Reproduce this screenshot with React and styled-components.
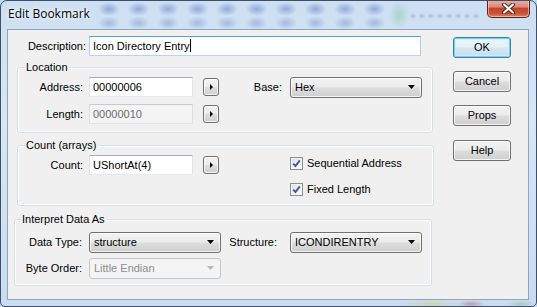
import styled, { createGlobalStyle } from "styled-components";

const GlobalStyle = createGlobalStyle`
  html, body { margin: 0; padding: 0; background: #c6d8ec; }
  * { box-sizing: border-box; }
`;

const blob = (x, y, rx, ry, c) =>
  `radial-gradient(ellipse ${rx}px ${ry}px at ${x}px ${y}px, ${c}, rgba(0,0,0,0))`;

const titleBlobs = (() => {
  const list = [];
  for (let x = 108; x <= 380; x += 29.5) {
    list.push(blob(x, 8, 11, 7, "rgba(60,95,185,0.42)"));
    list.push(blob(x, 22, 11, 7, "rgba(60,95,185,0.30)"));
  }
  list.push(blob(398, 14, 10, 14, "rgba(120,190,150,0.4)"));
  for (let x = 412; x <= 478; x += 9) {
    list.push(blob(x, 15, 4, 3, "rgba(60,90,150,0.28)"));
  }
  return list.join(",");
})();

const Window = styled.div`
  width: 537px;
  height: 307px;
  display: flex;
  flex-direction: column;
  padding-bottom: 7px;
  border: 1px solid #3e5068;
  border-radius: 7px 7px 5px 5px;
  background:
    ${blob(430, 303, 30, 4, "rgba(220,200,90,0.45)")},
    ${blob(470, 303, 14, 4, "rgba(190,70,70,0.45)")},
    ${blob(520, 303, 14, 4, "rgba(110,180,110,0.4)")},
    linear-gradient(180deg, #cddff2 0%, #d8e6f5 40%, #c9dcf0 100%);
  overflow: hidden;
  font-family: "Liberation Sans", Arial, sans-serif;
  font-size: 11px;
  color: #000;
`;

const TitleBar = styled.div`
  height: 29px;
  display: flex;
  align-items: flex-start;
  justify-content: space-between;
  padding-left: 7px;
  background: ${titleBlobs};
`;

const Title = styled.div`
  margin-top: 5px;
  font-family: "Open Sans", "Noto Sans", sans-serif;
  font-size: 12px;
  line-height: 16px;
  color: #000;
  text-shadow: 0 0 6px #fff, 0 0 3px #fff;
`;

const CloseButton = styled.div`
  width: 43px;
  height: 18px;
  margin-top: -1px;
  margin-right: 6px;
  border: 1px solid #5b2218;
  border-top: none;
  border-radius: 0 0 5px 5px;
  background: linear-gradient(180deg, #eab3a6 0%, #d98b78 40%, #c4442c 50%, #c9553a 80%, #e08a5e 100%);
  box-shadow: inset 0 0 0 1px rgba(255, 220, 210, 0.55);
  display: flex;
  align-items: center;
  justify-content: center;
`;

const Client = styled.div`
  width: 520px;
  height: 270px;
  margin-left: 7px;
  background: #f0f0f0;
  box-shadow: 0 0 0 1px #8ea5c0;
  display: flex;
`;

const Main = styled.div`
  width: 445px;
  padding-top: 6px;
  display: flex;
  flex-direction: column;
`;

const ButtonColumn = styled.div`
  width: 58px;
  padding-top: 7px;
  display: flex;
  flex-direction: column;
`;

const Row = styled.div`
  display: flex;
  align-items: center;
  height: ${(p) => p.$h || 21}px;
  margin-top: ${(p) => p.$mt || 0}px;
`;

const Label = styled.div`
  width: ${(p) => p.$w}px;
  padding-right: ${(p) => (p.$pr == null ? 6 : p.$pr)}px;
  text-align: right;
  white-space: nowrap;
  flex-shrink: 0;
`;

const TextBox = styled.div`
  width: ${(p) => p.$w}px;
  height: 20px;
  flex-shrink: 0;
  display: flex;
  align-items: center;
  padding-left: 3px;
  white-space: nowrap;
  border: 1px solid;
  border-color: ${(p) =>
    p.$focus
      ? "#569de5 #a9cdf1 #b7d5f3 #a9cdf1"
      : p.$disabled
      ? "#c7c9cc #dcdee2 #e2e4e7 #dcdee2"
      : "#abadb3 #e2e3ea #e3e9ef #e2e3ea"};
  background: ${(p) => (p.$disabled ? "#f4f4f4" : "#fff")};
  color: ${(p) => (p.$disabled ? "#6d6d6d" : "#000")};
`;

const Caret = styled.span`
  display: inline-block;
  width: 1px;
  height: 13px;
  background: #000;
`;

const buttonFace = `
  border: 1px solid #707070;
  border-radius: 3px;
  background: linear-gradient(180deg, #f2f2f2 0%, #ebebeb 48%, #dddddd 52%, #cfcfcf 100%);
  box-shadow: inset 0 0 0 1px rgba(255, 255, 255, 0.75);
`;

const ArrowButton = styled.div`
  ${buttonFace}
  width: 16px;
  height: 18px;
  margin-left: ${(p) => p.$ml || 10}px;
  flex-shrink: 0;
  display: flex;
  align-items: center;
  justify-content: center;
  &::after {
    content: "";
    border-left: 3px solid #000;
    border-top: 3.5px solid transparent;
    border-bottom: 3.5px solid transparent;
    margin-left: 1px;
  }
`;

const Combo = styled.div`
  ${(p) =>
    p.$disabled
      ? `border: 1px solid #c2c6c9; border-radius: 3px; background: #f4f4f4; color: #8d8d8d;`
      : buttonFace}
  width: ${(p) => p.$w || 132}px;
  height: 21px;
  flex-shrink: 0;
  display: flex;
  align-items: center;
  justify-content: space-between;
  padding: 0 6px 0 4px;
  white-space: nowrap;
`;

const DownArrow = ({ color = "#000" }) => (
  <svg width="7" height="4" viewBox="0 0 7 4">
    <polygon points="0,0 7,0 3.5,4" fill={color} />
  </svg>
);

const GroupBox = styled.div`
  position: relative;
  display: ${(p) => (p.$row ? "flex" : "block")};
  margin-top: ${(p) => p.$mt}px;
  margin-left: ${(p) => p.$ml}px;
  width: ${(p) => p.$w}px;
  height: ${(p) => p.$h}px;
  padding-top: ${(p) => p.$pt}px;
  border: 1px solid #d5dfe5;
  border-radius: 3px;
  box-shadow: inset 0 0 0 1px #fff;
`;

const GroupTitle = styled.div`
  position: absolute;
  top: -7px;
  left: ${(p) => p.$l || 7}px;
  padding: 0 2px 0 1px;
  line-height: 13px;
  background: #f0f0f0;
`;

const CheckColumn = styled.div`
  margin-left: ${(p) => p.$ml}px;
  padding-top: 2px;
  display: flex;
  flex-direction: column;
  gap: 13px;
`;

const CheckRow = styled.div`
  display: flex;
  align-items: center;
  height: 13px;
  gap: 4px;
  white-space: nowrap;
`;

const CheckBox = styled.div`
  width: 13px;
  height: 13px;
  border: 1px solid #8e8f8f;
  background: linear-gradient(135deg, #dcdcdc 0%, #f4f4f4 60%, #ffffff 100%);
  box-shadow: inset 0 0 0 1px #f4f4f4;
  display: flex;
  align-items: center;
  justify-content: center;
`;

const PushButton = styled.div`
  ${buttonFace}
  width: 58px;
  height: 21px;
  margin-top: ${(p) => p.$mt || 0}px;
  display: flex;
  align-items: center;
  justify-content: center;
  ${(p) =>
    p.$default &&
    `border-color: #3c7fb1;
     box-shadow: inset 0 0 0 1px #6fd3f5, inset 0 0 0 2px rgba(200,240,252,0.6);
     background: linear-gradient(180deg, #eaf6fd 0%, #e4f1f9 48%, #d3e6f2 52%, #c9dfee 100%);`}
`;

const Check = () => (
  <CheckBox>
    <svg width="9" height="9" viewBox="0 0 9 9">
      <path d="M1.2 4.6 L3.5 7 L7.8 1.4" fill="none" stroke="#3b5aa3" strokeWidth="1.9" />
    </svg>
  </CheckBox>
);

const App = () => {
  return (
    <>
      <GlobalStyle />
      <Window>
        <TitleBar>
          <Title>Edit Bookmark</Title>
          <CloseButton>
            <svg width="13" height="11" viewBox="0 0 13 11">
              <path d="M2 1.5 L11 9.5 M11 1.5 L2 9.5" stroke="#4a1a12" strokeWidth="4" strokeLinecap="round" />
              <path d="M2 1.5 L11 9.5 M11 1.5 L2 9.5" stroke="#fff" strokeWidth="2.2" strokeLinecap="round" />
            </svg>
          </CloseButton>
        </TitleBar>

        <Client>
          <Main>
            <Row $h={20}>
              <Label $w={81} $pr={3}>Description:</Label>
              <TextBox $w={332} $focus>
                Icon Directory Entry<Caret />
              </TextBox>
            </Row>

            <GroupBox $mt={11} $ml={9} $w={416} $h={66} $pt={9}>
              <GroupTitle>Location</GroupTitle>
              <Row>
                <Label $w={71}>Address:</Label>
                <TextBox $w={104}>00000006</TextBox>
                <ArrowButton />
                <Label $w={71} $pr={8}>Base:</Label>
                <Combo>
                  Hex
                  <DownArrow />
                </Combo>
              </Row>
              <Row $mt={6} $h={20}>
                <Label $w={71}>Length:</Label>
                <TextBox $w={104} $disabled>00000010</TextBox>
                <ArrowButton />
              </Row>
            </GroupBox>

            <GroupBox $row $mt={12} $ml={9} $w={417} $h={61} $pt={9}>
              <GroupTitle>Count (arrays)</GroupTitle>
              <Row $h={20}>
                <Label $w={71}>Count:</Label>
                <TextBox $w={104}>UShortAt(4)</TextBox>
                <ArrowButton />
              </Row>
              <CheckColumn $ml={71}>
                <CheckRow>
                  <Check />
                  Sequential Address
                </CheckRow>
                <CheckRow>
                  <Check />
                  Fixed Length
                </CheckRow>
              </CheckColumn>
            </GroupBox>

            <GroupBox $mt={13} $ml={6} $w={418} $h={67} $pt={12}>
              <GroupTitle $l={6}>Interpret Data As</GroupTitle>
              <Row>
                <Label $w={74} $pr={7}>Data Type:</Label>
                <Combo>
                  structure
                  <DownArrow />
                </Combo>
                <Label $w={69} $pr={13}>Structure:</Label>
                <Combo>
                  ICONDIRENTRY
                  <DownArrow />
                </Combo>
              </Row>
              <Row $mt={5}>
                <Label $w={74} $pr={7}>Byte Order:</Label>
                <Combo $disabled>
                  Little Endian
                  <DownArrow color="#b8b8b8" />
                </Combo>
              </Row>
            </GroupBox>
          </Main>

          <ButtonColumn>
            <PushButton $default>OK</PushButton>
            <PushButton $mt={13}>Cancel</PushButton>
            <PushButton $mt={13}>Props</PushButton>
            <PushButton $mt={14}>Help</PushButton>
          </ButtonColumn>
        </Client>
      </Window>
    </>
  );
};

export default App;
